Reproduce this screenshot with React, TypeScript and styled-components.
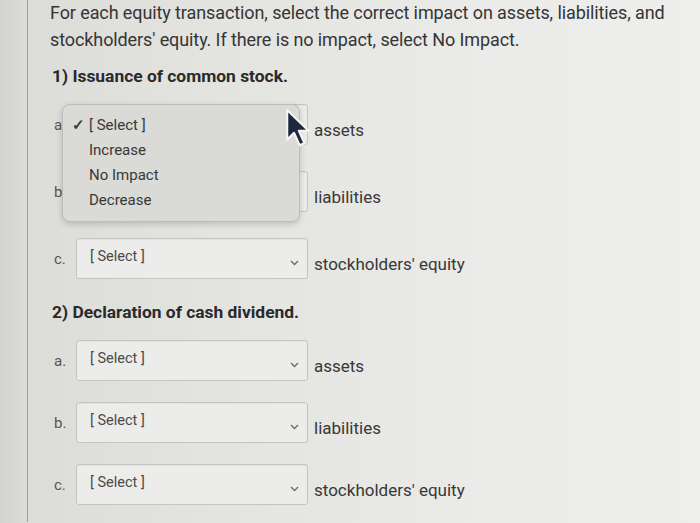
import React from "react";
import styled, { createGlobalStyle } from "styled-components";

const Global = createGlobalStyle`
  html, body { margin: 0; padding: 0; }
  body {
    width: 700px;
    height: 523px;
    overflow: hidden;
    background: linear-gradient(90deg, #d3d3d0 0%, #dcdcd9 4%, #e3e3e0 30%, #ebebe9 70%, #eeeeec 100%);
    font-family: Roboto, "Liberation Sans", sans-serif;
    color: #363636;
  }
`;

const Page = styled.div`
  margin-left: 27px;
  height: 523px;
  border-left: 1px solid #9c9c98;
  position: relative;
`;

const Content = styled.div`
  padding-left: 22px;
  padding-top: 0;
`;

const Intro = styled.p`
  margin: -1px 0 0;
  font-size: 18px;
  line-height: 27px;
  color: #353535;
  letter-spacing: -0.1px;
`;

const Heading = styled.h3<{ $top: number }>`
  margin: ${(p) => p.$top}px 0 0 2px;
  font-size: 17.4px;
  line-height: 27px;
  font-weight: 700;
  color: #2a2a2a;
`;

const Rows = styled.div<{ $gap: number; $top: number }>`
  display: flex;
  flex-direction: column;
  gap: ${(p) => p.$gap}px;
  margin-top: ${(p) => p.$top}px;
  padding-left: 4px;
`;

const Row = styled.div`
  display: flex;
  align-items: center;
  position: relative;
`;

const Letter = styled.span`
  width: 22px;
  font-size: 15px;
  color: #555;
`;

const SelectBox = styled.div`
  width: 232px;
  height: 41px;
  box-sizing: border-box;
  border: 1px solid #c4c4c1;
  border-radius: 3px;
  background: #ececea;
  box-shadow: inset 0 1px 1px rgba(0, 0, 0, 0.04);
  display: flex;
  align-items: center;
  padding: 0 8px 0 13px;
`;

const Placeholder = styled.span`
  flex: 1;
  font-size: 14.5px;
  color: #4a4a4a;
  padding-bottom: 4px;
`;

const Chevron = styled.svg`
  width: 9px;
  height: 6px;
  margin-top: 8px;
`;

const After = styled.span`
  margin-left: 6px;
  padding-top: 10px;
  font-size: 17px;
  color: #383838;
`;

const Popup = styled.div`
  position: absolute;
  left: 8px;
  top: 0;
  width: 238px;
  box-sizing: border-box;
  padding: 7px 0 9px;
  background: #dadad6;
  border: 1px solid #bcbcb8;
  border-radius: 8px;
  box-shadow: 0 2px 6px rgba(0, 0, 0, 0.18);
  z-index: 2;
`;

const Option = styled.div`
  height: 25px;
  display: flex;
  align-items: center;
  font-size: 15px;
  color: #383838;
`;

const Check = styled.span`
  width: 17px;
  padding-left: 9px;
  font-size: 15px;
  font-weight: 700;
  color: #3a3a3a;
`;

const Cursor = styled.svg`
  position: absolute;
  left: 257px;
  top: 109px;
  width: 25px;
  height: 40px;
  z-index: 3;
`;

const ChevronIcon = () => (
  <Chevron viewBox="0 0 9 6">
    <path d="M1 1 L4.5 4.5 L8 1" fill="none" stroke="#6a6a6a" strokeWidth="1.3" />
  </Chevron>
);

const Select = ({ covered }: { covered?: boolean }) => (
  <SelectBox>
    <Placeholder>{covered ? "" : "[ Select ]"}</Placeholder>
    <ChevronIcon />
  </SelectBox>
);

type Item = { letter: string; label: string };

const OptionList = () => (
  <Popup>
    <Option>
      <Check>✓</Check>[ Select ]
    </Option>
    <Option>
      <Check />Increase
    </Option>
    <Option>
      <Check />No Impact
    </Option>
    <Option>
      <Check />Decrease
    </Option>
  </Popup>
);

const first: Item[] = [
  { letter: "a", label: "assets" },
  { letter: "b", label: "liabilities" },
  { letter: "c.", label: "stockholders' equity" },
];
const second: Item[] = [
  { letter: "a.", label: "assets" },
  { letter: "b.", label: "liabilities" },
  { letter: "c.", label: "stockholders' equity" },
];

export default function App() {
  return (
    <>
      <Global />
      <Page>
        <Content>
          <Intro>
            For each equity transaction, select the correct impact on assets, liabilities, and
            stockholders' equity. If there is no impact, select No Impact.
          </Intro>
          <Heading $top={10}>1) Issuance of common stock.</Heading>
          <Rows $gap={26} $top={14}>
            {first.map((it, i) => (
              <Row key={it.label}>
                <Letter>{it.letter}</Letter>
                <Select covered={i < 2} />
                <After>{it.label}</After>
                {i === 0 && <OptionList />}
              </Row>
            ))}
          </Rows>
          <Heading $top={20}>2) Declaration of cash dividend.</Heading>
          <Rows $gap={21} $top={14}>
            {second.map((it) => (
              <Row key={it.label}>
                <Letter>{it.letter}</Letter>
                <Select />
                <After>{it.label}</After>
              </Row>
            ))}
          </Rows>
        </Content>
        <Cursor viewBox="0 0 18 29">
          <path
            d="M1.5 1.5 L1.5 23 L6.5 18 L10.5 27 L14 25.5 L10 16.5 L17 16.5 Z"
            fill="#1e2640"
            stroke="#f4f4f4"
            strokeWidth="1.6"
            strokeLinejoin="round"
          />
        </Cursor>
      </Page>
    </>
  );
}
